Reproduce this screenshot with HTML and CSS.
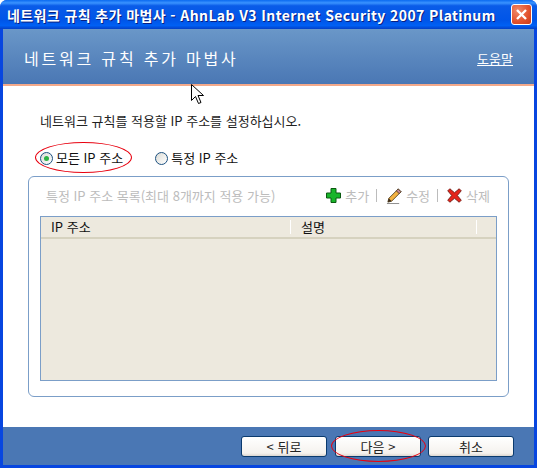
FILE: index.html
```html
<!DOCTYPE html>
<html lang="ko">
<head>
  <meta charset="UTF-8" />
  <title>네트워크 규칙 추가 마법사</title>
  <link rel="stylesheet" href="styles.css">
</head>
<body>

  <div class="window">
    <div class="titlebar">
      <span class="title-text">네트워크 규칙 추가 마법사 - AhnLab V3 Internet Security 2007 Platinum</span>
      <button class="close-btn" aria-label="닫기">
        <svg width="13" height="13" viewBox="0 0 13 13"><path d="M2 2 L11 11 M11 2 L2 11" stroke="#fff" stroke-width="2.4" fill="none"/></svg>
      </button>
    </div>

    <div class="content">
      <header class="wizard-head">
        <h1>네트워크 규칙 추가 마법사</h1>
        <a class="help-link" href="#">도움말</a>
      </header>

      <main class="wizard-body">
        <p class="intro">네트워크 규칙를 적용할 IP 주소를 설정하십시오.</p>

        <div class="radio-row">
          <label class="radio">
            <span class="radio-dot checked"></span>모든 IP 주소
          </label>
          <label class="radio">
            <span class="radio-dot"></span>특정 IP 주소
          </label>
        </div>

        <section class="group">
          <div class="group-head">
            <span class="group-title">특정 IP 주소 목록(최대 8개까지 적용 가능)</span>
            <div class="tools">
              <svg width="15" height="15" viewBox="0 0 15 15"><path d="M5 .5h5v4.500h4.500v5H10v4.500H5V10H.5V5H5z" fill="#19b52a" stroke="#0b5a10"/></svg>
              <span>추가</span>
              <i class="sep"></i>
              <svg width="16" height="18" viewBox="0 0 17 18"><path d="M13 1.500l3 3L6 14.500l-4 1 1-4z" fill="#f5b342" stroke="#4a3a20" stroke-width=".9"/><path d="M13 1.500l3 3-2 2-3-3z" fill="#c98a98" stroke="#4a3a20" stroke-width=".9"/><path d="M2 15.500l1-4 3 3z" fill="#3a2a18"/><path d="M1 17h13" stroke="#888"/></svg>
              <span>수정</span>
              <i class="sep"></i>
              <svg width="15" height="15" viewBox="0 0 16 16"><path d="M.8 3L3 .8 8 5 13 .8 15.200 3 11 8l4.200 5-2.200 2.200L8 11l-5 4.200L.8 13 5 8z" fill="#e5251b" stroke="#6a1510" stroke-width=".9"/></svg>
              <span>삭제</span>
            </div>
          </div>

          <div class="list">
            <div class="list-head">
              <div class="col col-ip">IP 주소</div>
              <div class="col col-desc">설명</div>
              <div class="col col-rest"></div>
            </div>
          </div>
        </section>
      </main>

      <footer class="wizard-foot">
        <button class="btn btn-back">&lt; 뒤로</button>
        <button class="btn">다음 &gt;</button>
        <button class="btn">취소</button>
      </footer>
    </div>

    <!-- red marker rings drawn over the shot -->
    <i class="ring ring-radio"></i>
    <i class="ring ring-next"></i>

    <svg class="cursor" width="13" height="21" viewBox="0 0 13 21"><path d="M.5.5v16l4-4 3 7 2.500-1-3-7h5.500z" fill="#fff" stroke="#000"/></svg>
  </div>

</body>
</html>
```

FILE: styles.css
```css
* {
  box-sizing: border-box;
}

body {
  margin: 0;
  font-family: "Noto Sans CJK KR", "Liberation Sans", sans-serif;
  font-size: 13px;
  background: #fff;
}

.window {
  position: relative;
  width: 537px;
  height: 468px;
  display: flex;
  flex-direction: column;
  background: #0746e0;
  border-radius: 7px 7px 0 0;
  overflow: hidden;
}

.titlebar {
  height: 29px;
  flex: none;
  display: flex;
  align-items: center;
  justify-content: space-between;
  padding: 0 5px 0 7px;
  background: linear-gradient(180deg, #0a6af0 0%, #3a93ff 10%, #0a5ce8 20%, #0055e8 70%, #0060f4 88%, #0340c8 100%);
}

.title-text {
  color: #fff;
  font-size: 14px;
  font-weight: 700;
  letter-spacing: 0.4px;
  white-space: nowrap;
  text-shadow: 1px 1px 0 #0a1f80;
}

.close-btn {
  width: 21px;
  height: 21px;
  padding: 0;
  display: flex;
  align-items: center;
  justify-content: center;
  background: radial-gradient(circle at 30% 30%, #f08a6a, #e2512c 60%, #c93a1a);
  border: 1px solid #fff;
  border-radius: 3px;
}

.content {
  flex: 1;
  margin: 0 3px 3px;
  display: flex;
  flex-direction: column;
  background: #fff;
}

.wizard-head {
  height: 57px;
  flex: none;
  display: flex;
  align-items: center;
  justify-content: space-between;
  padding: 3px 21px 0;
  background: linear-gradient(180deg, #6a97c8, #4a77b4);
  border-bottom: 2px solid #f4a98a;
  color: #fff;
}

.wizard-head h1 {
  margin: 0;
  font-size: 16px;
  font-weight: 400;
  letter-spacing: 2.8px;
}

.help-link {
  color: #fff;
  font-size: 13px;
  text-decoration: underline;
}

.wizard-body {
  flex: 1;
  padding: 0 25px;
  display: flex;
  flex-direction: column;
}

.intro {
  margin: 27px 0 0 12px;
  line-height: 16px;
  color: #222;
}

.radio-row {
  display: flex;
  gap: 32px;
  margin: 21px 0 0 12px;
}

.radio {
  display: flex;
  align-items: center;
  gap: 3px;
  line-height: 16px;
  color: #111;
}

.radio-dot {
  width: 13px;
  height: 13px;
  flex: none;
  display: flex;
  align-items: center;
  justify-content: center;
  border: 1px solid #1c5180;
  border-radius: 50%;
  background: linear-gradient(135deg, #dcdcd6, #fff);
}

.radio-dot.checked::after {
  content: "";
  width: 5px;
  height: 5px;
  border-radius: 50%;
  background: #2fb344;
}

.group {
  height: 221px;
  margin-top: 10px;
  padding: 0 11px;
  border: 1px solid #7b9ec8;
  border-radius: 6px;
}

.group-head {
  height: 39px;
  display: flex;
  align-items: center;
  justify-content: space-between;
  padding: 0 7px 2px 6px;
  color: #bcbcbc;
}

.tools {
  display: flex;
  align-items: center;
  gap: 4px;
}

.sep {
  width: 1px;
  height: 13px;
  margin: 0 5px 0 3px;
  background: #bcbcbc;
}

.list {
  height: 165px;
  background: #ede9de;
  border: 1px solid #7b9ec8;
}

.list-head {
  height: 22px;
  display: flex;
  align-items: center;
  border-bottom: 2px solid #d6d2bf;
  color: #111;
}

.col {
  height: 14px;
  line-height: 14px;
  padding-left: 10px;
  border-right: 1px solid #fff;
}

.col-ip {
  width: 250px;
}

.col-desc {
  width: 186px;
}

.col-rest {
  flex: 1;
  border-right: none;
}

.wizard-foot {
  height: 38px;
  flex: none;
  display: flex;
  justify-content: flex-end;
  align-items: center;
  gap: 7px;
  padding: 0 20px 0 0;
  background: #4a77b4;
}

.btn {
  width: 86px;
  height: 21px;
  padding: 0;
  font: inherit;
  color: #222;
  background: linear-gradient(180deg, #fff, #f5f2ee 85%, #dcd6d0);
  border: 1px solid #0a3a6e;
  border-radius: 3px;
}

.btn-back {
  margin-right: 1px;
}

.ring {
  position: absolute;
  border: 1.5px solid #e8000f;
  border-radius: 50%;
}

.ring-radio {
  left: 35px;
  top: 142px;
  width: 97px;
  height: 31px;
}

.ring-next {
  left: 331px;
  top: 430px;
  width: 95px;
  height: 32px;
}

.cursor {
  position: absolute;
  left: 191px;
  top: 84px;
}
```
